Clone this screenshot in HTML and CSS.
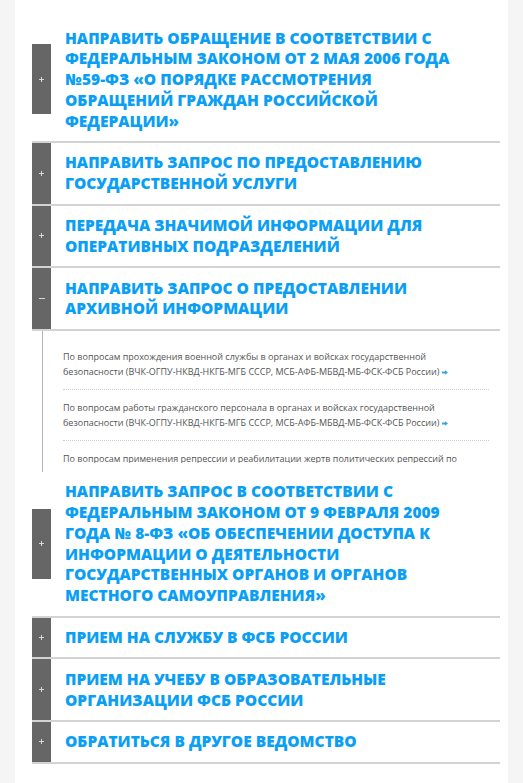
FILE: index.html
```html
<!DOCTYPE html>
<html lang="ru">
<head>
<meta charset="utf-8">
<title>Обращения</title>
<link rel="stylesheet" href="styles.css">
</head>
<body>
<div class="page">
  <div class="acc-item">
    <div class="acc-head">
      <div class="acc-toggle"><span class="acc-bar"><svg class="ico" width="5" height="5" viewBox="0 0 5 5"><path d="M2.5 0v5M0 2.5h5" stroke="#d8d8d8" stroke-width="1"/></svg></span></div>
      <div class="acc-title">Направить обращение в соответствии с Федеральным законом от 2 мая 2006 года №59-ФЗ «О порядке рассмотрения обращений граждан Российской Федерации»</div>
    </div>
  </div>
  <div class="acc-item">
    <div class="acc-head">
      <div class="acc-toggle"><span class="acc-bar"><svg class="ico" width="5" height="5" viewBox="0 0 5 5"><path d="M2.5 0v5M0 2.5h5" stroke="#d8d8d8" stroke-width="1"/></svg></span></div>
      <div class="acc-title">Направить запрос по предоставлению государственной услуги</div>
    </div>
  </div>
  <div class="acc-item">
    <div class="acc-head">
      <div class="acc-toggle"><span class="acc-bar"><svg class="ico" width="5" height="5" viewBox="0 0 5 5"><path d="M2.5 0v5M0 2.5h5" stroke="#d8d8d8" stroke-width="1"/></svg></span></div>
      <div class="acc-title">Передача значимой информации для оперативных подразделений</div>
    </div>
  </div>
  <div class="acc-item">
    <div class="acc-head">
      <div class="acc-toggle"><span class="acc-bar"><svg class="ico" width="6" height="5" viewBox="0 0 6 5"><path d="M0 2.5h6" stroke="#d8d8d8" stroke-width="1"/></svg></span></div>
      <div class="acc-title">Направить запрос о предоставлении архивной информации</div>
    </div>
    <div class="acc-panel">
      <div class="panel-clip">
        <div class="entry"><span class="entry-text">По вопросам прохождения военной службы в органах и войсках государственной безопасности (ВЧК-ОГПУ-НКВД-НКГБ-МГБ СССР, МСБ-АФБ-МБВД-МБ-ФСК-ФСБ России) <svg class="arrow" width="6" height="5" viewBox="0 0 6 5"><path d="M0 1.6h3V0.2L6 2.5 3 4.8V3.4H0z" fill="#3d9fe0"/></svg></span></div>
        <div class="entry"><span class="entry-text">По вопросам работы гражданского персонала в органах и войсках государственной безопасности (ВЧК-ОГПУ-НКВД-НКГБ-МГБ СССР, МСБ-АФБ-МБВД-МБ-ФСК-ФСБ России) <svg class="arrow" width="6" height="5" viewBox="0 0 6 5"><path d="M0 1.6h3V0.2L6 2.5 3 4.8V3.4H0z" fill="#3d9fe0"/></svg></span></div>
        <div class="entry"><span class="entry-text">По вопросам применения репрессии и реабилитации жертв политических репрессий по решениям органов государственной безопасности <svg class="arrow" width="6" height="5" viewBox="0 0 6 5"><path d="M0 1.6h3V0.2L6 2.5 3 4.8V3.4H0z" fill="#3d9fe0"/></svg></span></div>
      </div>
    </div>
  </div>
  <div class="acc-item">
    <div class="acc-head">
      <div class="acc-toggle"><span class="acc-bar"><svg class="ico" width="5" height="5" viewBox="0 0 5 5"><path d="M2.5 0v5M0 2.5h5" stroke="#d8d8d8" stroke-width="1"/></svg></span></div>
      <div class="acc-title">Направить запрос в соответствии с Федеральным законом от 9 февраля 2009 года № 8-ФЗ «Об обеспечении доступа к информации о деятельности государственных органов и органов местного самоуправления»</div>
    </div>
  </div>
  <div class="acc-item">
    <div class="acc-head">
      <div class="acc-toggle"><span class="acc-bar"><svg class="ico" width="5" height="5" viewBox="0 0 5 5"><path d="M2.5 0v5M0 2.5h5" stroke="#d8d8d8" stroke-width="1"/></svg></span></div>
      <div class="acc-title">Прием на службу в ФСБ России</div>
    </div>
  </div>
  <div class="acc-item">
    <div class="acc-head">
      <div class="acc-toggle"><span class="acc-bar"><svg class="ico" width="5" height="5" viewBox="0 0 5 5"><path d="M2.5 0v5M0 2.5h5" stroke="#d8d8d8" stroke-width="1"/></svg></span></div>
      <div class="acc-title">Прием на учебу в образовательные организации ФСБ России</div>
    </div>
  </div>
  <div class="acc-item">
    <div class="acc-head">
      <div class="acc-toggle"><span class="acc-bar"><svg class="ico" width="5" height="5" viewBox="0 0 5 5"><path d="M2.5 0v5M0 2.5h5" stroke="#d8d8d8" stroke-width="1"/></svg></span></div>
      <div class="acc-title">Обратиться в другое ведомство</div>
    </div>
  </div>
</div>
</body>
</html>
```
FILE: styles.css
```css
html, body {
  margin: 0;
  padding: 0;
}
body {
  background: #f5f5f5;
  font-family: "Open Sans", "Liberation Sans", sans-serif;
}
.page {
  box-sizing: border-box;
  margin-left: 15px;
  width: 493px;
  min-height: 783px;
  background: #fff;
  padding: 18px 8px 17px 17px;
}
.acc-head {
  display: flex;
  border-bottom: 2px solid #d3d3d3;
}
.acc-toggle {
  flex: none;
  width: 19px;
  display: flex;
  align-items: center;
}
.acc-bar {
  width: 19px;
  height: 100%;
  max-height: 70px;
  background: #666;
  display: flex;
  align-items: center;
  justify-content: center;
}
.ico {
  display: block;
}
.acc-title {
  flex: 1;
  padding: 9.5px 42px 9.5px 14px;
  font-size: 15.5px;
  line-height: 20.8px;
  font-weight: 800;
  color: #0a9ff5;
  text-transform: uppercase;
}
.acc-panel {
  margin-left: 10px;
  border-left: 1px solid #b5b5b5;
  padding: 8px 11px 9px 20px;
}
.panel-clip {
  height: 124px;
  overflow: hidden;
}
.entry {
  padding: 10px 22px 10px 0;
  border-bottom: 1px dotted #d0d0d0;
  font-size: 9px;
  line-height: 15px;
  color: #555;
}
.arrow {
  display: inline-block;
  vertical-align: middle;
}
```
